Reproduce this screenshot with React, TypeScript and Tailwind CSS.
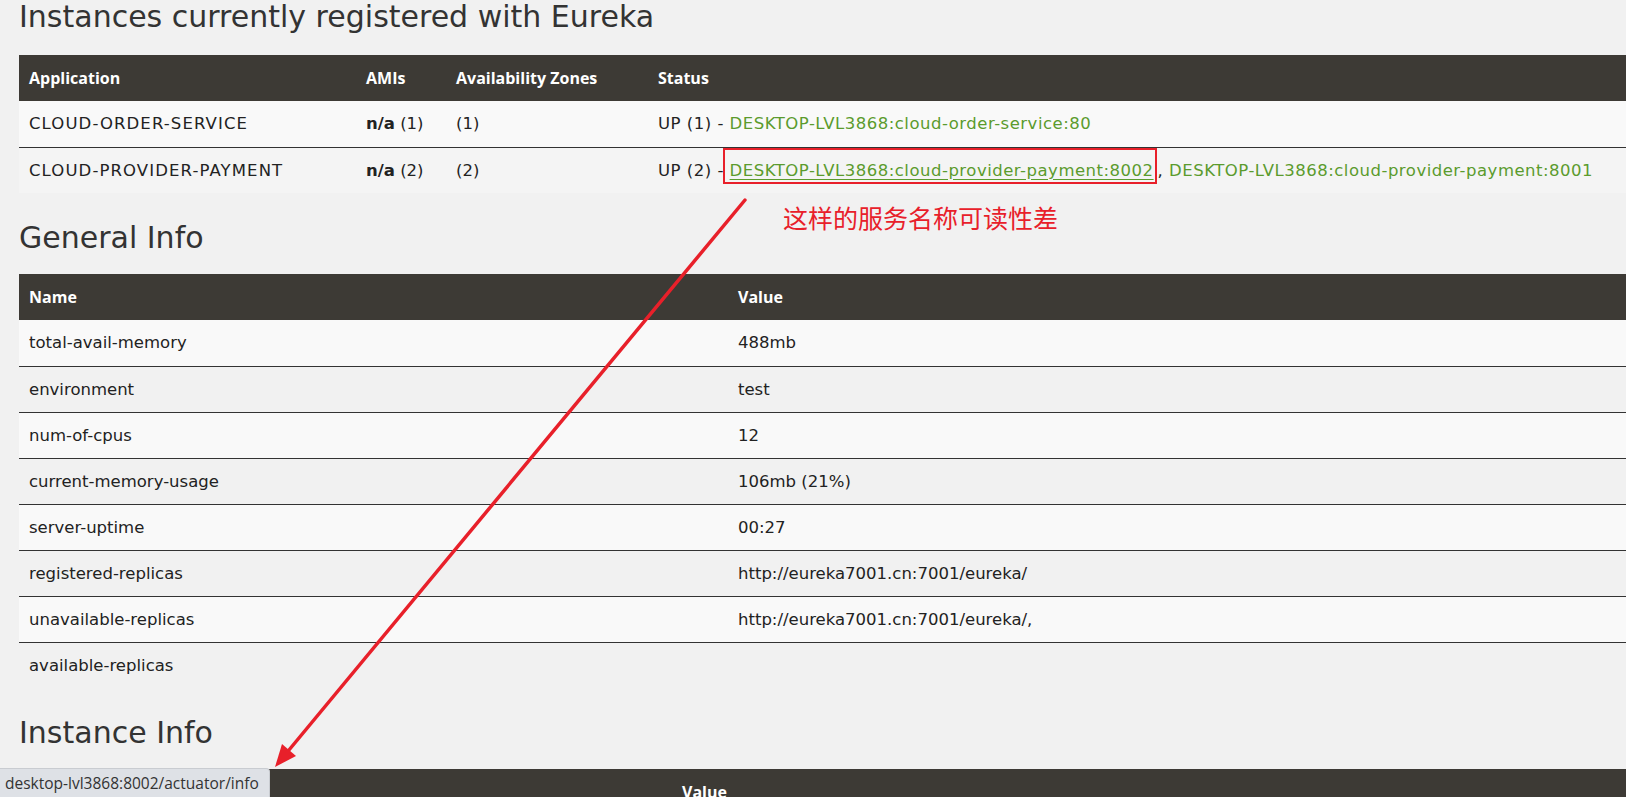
const instances = [
  {
    app: "CLOUD-ORDER-SERVICE",
    amis: "(1)",
    zones: "(1)",
    status: "UP (1) - ",
    links: ["DESKTOP-LVL3868:cloud-order-service:80"],
  },
  {
    app: "CLOUD-PROVIDER-PAYMENT",
    amis: "(2)",
    zones: "(2)",
    status: "UP (2) - ",
    links: [
      "DESKTOP-LVL3868:cloud-provider-payment:8002",
      "DESKTOP-LVL3868:cloud-provider-payment:8001",
    ],
  },
];

const general = [
  ["total-avail-memory", "488mb"],
  ["environment", "test"],
  ["num-of-cpus", "12"],
  ["current-memory-usage", "106mb (21%)"],
  ["server-uptime", "00:27"],
  ["registered-replicas", "http://eureka7001.cn:7001/eureka/"],
  ["unavailable-replicas", "http://eureka7001.cn:7001/eureka/,"],
  ["available-replicas", ""],
];

const th = "h-[46px] px-[10px] text-left font-bold text-white text-base font-['Open_Sans',sans-serif]";
const td = "h-[46px] px-[10px] pt-[2px] text-[16.5px] text-[#222]";

export default function App() {
  return (
    <div className="relative h-[797px] overflow-hidden bg-[#f1f1f1] pl-[19px] font-['DejaVu_Sans',sans-serif] text-[#222]">
      {/* Instances */}
      <h1 className="mt-[-1px] mb-[20px] text-[30px] leading-[36px] text-[#333]">
        Instances currently registered with Eureka
      </h1>
      <table className="w-[1640px] border-collapse">
        <thead>
          <tr className="bg-[#3d3a35]">
            <th className={`${th} w-[337px]`}>Application</th>
            <th className={`${th} w-[90px]`}>AMIs</th>
            <th className={`${th} w-[202px]`}>Availability Zones</th>
            <th className={th}>Status</th>
          </tr>
        </thead>
        <tbody>
          {instances.map((r, i) => (
            <tr
              key={r.app}
              className={`${i % 2 === 0 ? "bg-[#f9f9f9]" : "bg-[#f4f4f4]"} ${i > 0 ? "border-t border-[#333]" : ""}`}
            >
              <td className={`${td} tracking-[1.1px]`}>{r.app}</td>
              <td className={td}>
                <b className="font-semibold">n/a</b> {r.amis}
              </td>
              <td className={td}>{r.zones}</td>
              <td className={`${td} tracking-[0.5px]`}>
                {r.status}
                {r.links.map((l, j) => (
                  <span key={l}>
                    {j > 0 && <span className="ml-[4px]">, </span>}
                    {j === 0 && r.links.length > 1 ? (
                      <span className="relative">
                        <a className="text-[#5b9b2d] underline underline-offset-[3px]">{l}</a>
                        <span className="absolute -left-[7px] -right-[3px] -top-[13px] -bottom-[4px] border-2 border-[#e8202a]" />
                      </span>
                    ) : (
                      <a className="text-[#5b9b2d]">{l}</a>
                    )}
                  </span>
                ))}
              </td>
            </tr>
          ))}
        </tbody>
      </table>

      {/* General Info */}
      <h2 className="mt-[25px] mb-[16px] text-[30px] leading-[40px] text-[#333]">General Info</h2>
      <table className="w-[1640px] border-collapse">
        <thead>
          <tr className="bg-[#3d3a35]">
            <th className={`${th} w-[709px]`}>Name</th>
            <th className={th}>Value</th>
          </tr>
        </thead>
        <tbody>
          {general.map(([k, v], i) => (
            <tr
              key={k}
              className={`${i % 2 === 0 ? "bg-[#f9f9f9]" : "bg-[#f1f1f1]"} ${i > 0 ? "border-t border-[#333]" : ""}`}
            >
              <td className={td}>{k}</td>
              <td className={td}>{v}</td>
            </tr>
          ))}
        </tbody>
      </table>

      {/* Instance Info */}
      <h2 className="mt-[25px] mb-[16px] text-[30px] leading-[40px] text-[#333]">Instance Info</h2>
      <table className="w-[1640px] border-collapse">
        <thead>
          <tr className="bg-[#3d3a35]">
            <th className={`${th} w-[653px]`}>Name</th>
            <th className={th}>Value</th>
          </tr>
        </thead>
        <tbody>
          <tr className="bg-[#f9f9f9]">
            <td className={td}>ipAddr</td>
            <td className={td}>192.168.1.5</td>
          </tr>
        </tbody>
      </table>

      {/* annotation text */}
      <div className="absolute left-[783px] top-[200px] font-['Noto_Sans_CJK_SC',sans-serif] text-[25px] leading-[34px] text-[#e8202a]">
        这样的服务名称可读性差
      </div>

      {/* annotation arrow */}
      <svg className="absolute left-0 top-0" width="1626" height="797" viewBox="0 0 1626 797">
        <line x1="745" y1="200" x2="289" y2="750" stroke="#e8202a" strokeWidth="3.5" strokeLinecap="round" />
        <polygon points="275,767 296,756 282,744" fill="#e8202a" />
      </svg>

      {/* browser status bubble */}
      <div className="absolute bottom-0 left-0 h-[29px] w-[270px] rounded-tr-[4px] border-t border-r border-[#c9ccd1] bg-[#dee1e6] pl-[5px] font-['Open_Sans',sans-serif] text-[15.5px] leading-[28px] text-[#333]">
        desktop-lvl3868:8002/actuator/info
      </div>
    </div>
  );
}
